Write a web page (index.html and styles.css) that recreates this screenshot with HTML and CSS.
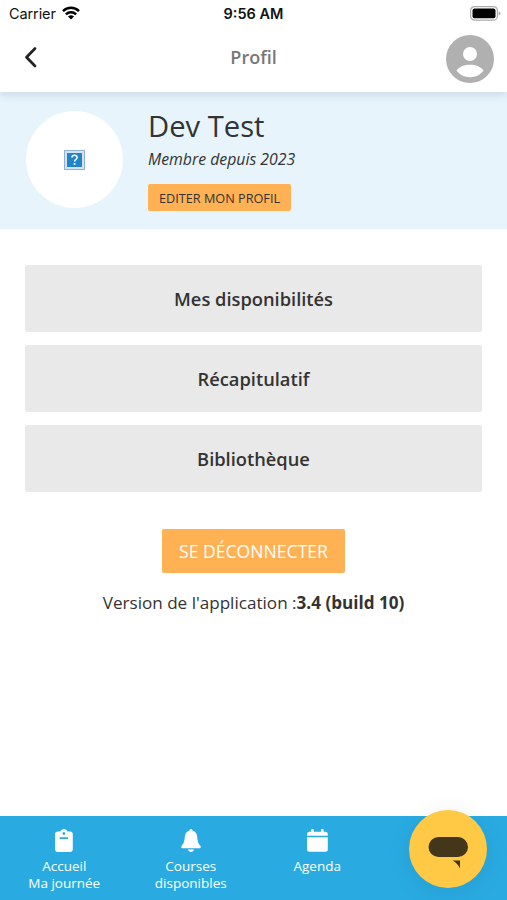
FILE: index.html
```
<!DOCTYPE html>
<html lang="fr">
<head>
    <meta charset="UTF-8">
    <meta name="viewport" content="width=device-width, initial-scale=1.0">
    <title>Profil</title>
    <link rel="stylesheet" href="styles.css">
</head>
<body>
    <div class="status-bar">
        <div class="carrier">
            <span>Carrier</span>
            <svg class="wifi" width="18" height="14" viewBox="0 0 18 14" fill="none" stroke="#000" stroke-width="2.5">
                <path d="M1 5.1a11.5 11.5 0 0 1 16 0"/>
                <path d="M3.9 8.3a7.3 7.3 0 0 1 10.2 0"/>
                <path d="M9 13.6L6 10.6a4.3 4.3 0 0 1 6 0z" fill="#000" stroke="none"/>
            </svg>
        </div>
        <div class="time">9:56 AM</div>
        <svg class="battery" width="31" height="15" viewBox="0 0 31 15">
            <rect x=".6" y=".6" width="26.8" height="13.6" rx="4" fill="#fff" stroke="#aaa" stroke-width="1.2"/>
            <rect x="2.5" y="2.5" width="23" height="9.8" rx="2" fill="#000"/>
            <path d="M28.7 5.2c2.3.8 2.3 3.6 0 4.4z" fill="#aaa"/>
        </svg>
    </div>
    <header class="header">
        <a href="#" class="back">
            <svg width="14" height="22" viewBox="0 0 14 22" fill="none" stroke="#222" stroke-width="2.7" stroke-linecap="round" stroke-linejoin="round">
                <path d="M11 2.5L2.5 11.2L11 20"/>
            </svg>
        </a>
        <h1 class="title">Profil</h1>
        <a href="#" class="account">
            <svg width="48" height="48" viewBox="0 0 48 48">
                <circle cx="24" cy="24" r="24" fill="#b0b0b0"/>
                <circle cx="24" cy="19" r="7" fill="#fff"/>
                <path d="M10.5 35.5C14 31.500 18 29.800 24 29.800S34 31.500 37.500 35.500C34.500 39.800 29.500 42.200 24 42.200S13.500 39.800 10.500 35.500z" fill="#fff"/>
            </svg>
        </a>
    </header>

    <section class="profile">
        <div class="avatar">
            <svg width="21" height="20" viewBox="0 0 21 20">
                <rect x=".5" y=".5" width="20" height="19" fill="#d3e3f3" stroke="#8fb2d6"/>
                <rect x="3" y="3" width="15" height="14" fill="#2285c7"/>
                <path d="M7.900 7.500c.1-3 5.200-3 5.200 0 0 1.900-2.500 1.900-2.500 4" fill="none" stroke="#fff" stroke-width="1.500"/>
                <rect x="9.700" y="13" width="1.700" height="1.800" fill="#fff"/>
            </svg>
        </div>
        <div class="infos">
            <h2 class="name">Dev Test</h2>
            <p class="since">Membre depuis 2023</p>
            <button class="edit">EDITER MON PROFIL</button>
        </div>
    </section>

    <main class="content">
        <div class="menu">
            <button class="menu-item">Mes disponibilités</button>
            <button class="menu-item">Récapitulatif</button>
            <button class="menu-item">Bibliothèque</button>
        </div>
        <button class="logout">SE DÉCONNECTER</button>
        <p class="version">Version de l'application :<b>3.4 (build 10)</b></p>
    </main>

    <nav class="tabs">
        <a href="#" class="tab">
            <svg width="18" height="23" viewBox="0 0 18 23">
                <path fill="#fff" fill-rule="evenodd" d="M3 2.500h2.300C6 .9 7.200 0 8.900 0s2.900.9 3.600 2.500H15a3 3 0 0 1 2.800 3V20a3 3 0 0 1-3 3H3a3 3 0 0 1-3-3V5.500a3 3 0 0 1 3-3zM8.900 3.100a1.400 1.400 0 1 0 .01 0zM4.700 8.300v1.700H13V8.300z"/>
            </svg>
            <span>Accueil<br>Ma journée</span>
        </a>
        <a href="#" class="tab">
            <svg width="20" height="23" viewBox="0 0 20 23" fill="#fff">
                <path d="M8.500 1.600a1.500 1.500 0 0 1 3 0c3.200.8 4.600 3.500 4.800 7 .2 3.800.9 5.800 3 8.200.9 1.200.3 2.400-1 2.400H1.700c-1.300 0-1.900-1.200-1-2.400 2.100-2.400 2.800-4.400 3-8.200.2-3.500 1.600-6.200 4.800-7z"/>
                <path d="M7 20.500h6c-.4 1.500-1.400 2.400-3 2.400s-2.600-.9-3-2.400z"/>
            </svg>
            <span>Courses<br>disponibles</span>
        </a>
        <a href="#" class="tab">
            <svg width="21" height="23" viewBox="0 0 21 23" fill="#fff">
                <path d="M0 6.700V5.200a2.500 2.500 0 0 1 2.500-2.500H4.200V1.200a1.300 1.300 0 0 1 2.600 0v1.500h7.200V1.200a1.300 1.300 0 0 1 2.600 0v1.500h1.700a2.500 2.500 0 0 1 2.500 2.500v1.500z"/>
                <path d="M0 8.200h20.800v12.100a2.500 2.500 0 0 1-2.500 2.500H2.500A2.500 2.500 0 0 1 0 20.300z"/>
            </svg>
            <span>Agenda</span>
        </a>
    </nav>
    <button class="chat">
        <svg width="40" height="32" viewBox="0 0 40 32" fill="#433619">
            <rect x=".5" y="0" width="39.500" height="20" rx="10"/>
            <path d="M24.500 23.500h7.500v8c-1.500-3.500-4-6-7.500-8z"/>
        </svg>
    </button>
</body>
</html>
```
FILE: styles.css
```
* {
    box-sizing: border-box;
}
body {
    font-family: 'Open Sans', sans-serif;
    margin: 0;
    height: 100vh;
    display: flex;
    flex-direction: column;
    background-color: #fff;
    color: #333;
    overflow: hidden;
}
h1, h2, p {
    margin: 0;
}
a {
    color: inherit;
    text-decoration: none;
}
button {
    font-family: inherit;
    color: inherit;
    border: none;
    border-radius: 2px;
    padding: 0;
    cursor: pointer;
}
svg {
    display: block;
}
.status-bar {
    display: grid;
    grid-template-columns: 1fr auto 1fr;
    align-items: center;
    height: 27px;
    padding: 0 6px 0 9px;
    font-family: Inter, sans-serif;
    font-size: 14.5px;
    color: #111;
    background-color: #fff;
    z-index: 2;
}
.carrier {
    display: flex;
    align-items: center;
    gap: 6px;
    letter-spacing: -0.1px;
}
.wifi {
    margin-bottom: 2px;
}
.time {
    font-weight: 600;
    margin-right: 3px;
}
.battery {
    justify-self: end;
}
.header {
    display: grid;
    grid-template-columns: 1fr auto 1fr;
    align-items: center;
    height: 65px;
    padding: 0 13px 0 24px;
    background-color: #fff;
    box-shadow: 0 2px 9px rgba(60, 90, 120, 0.2);
    clip-path: inset(0 0 -14px 0);
    z-index: 1;
}
.back {
    margin-bottom: 5px;
}
.title {
    font-size: 18px;
    font-weight: 600;
    color: #777;
    margin: 0 11px 6px 0;
}
.account {
    justify-self: end;
    margin-bottom: 1px;
}
.profile {
    display: flex;
    height: 137px;
    padding: 19px 26px;
    gap: 25px;
    background-color: #e7f4fc;
}
.avatar {
    display: flex;
    align-items: center;
    justify-content: center;
    width: 97px;
    height: 97px;
    border-radius: 50%;
    background-color: #fff;
}
.infos {
    display: flex;
    flex-direction: column;
    align-items: flex-start;
}
.name {
    font-size: 29.2px;
    font-weight: 400;
    line-height: 30px;
}
.since {
    font-size: 15.8px;
    font-style: italic;
    line-height: 22px;
    margin: 7px 0 14px;
}
.edit {
    flex-shrink: 0;
    width: 143px;
    height: 27px;
    font-size: 12.7px;
    background-color: #ffb153;
}
.content {
    display: flex;
    flex: 1;
    flex-direction: column;
    align-items: center;
    padding: 36px 25px 0;
}
.menu {
    display: grid;
    gap: 13px;
    width: 100%;
}
.menu-item {
    height: 67px;
    font-size: 18.3px;
    font-weight: 600;
    background-color: #e9e9e9;
}
.logout {
    width: 183px;
    height: 44px;
    margin-top: 37px;
    font-size: 17.6px;
    color: #fff;
    background-color: #ffb153;
}
.version {
    margin-top: 18px;
    font-size: 17.1px;
    line-height: 24px;
}
.tabs {
    display: grid;
    grid-template-columns: repeat(4, 1fr);
    height: 84px;
    padding: 13px 0 0 1px;
    background-color: #29abe2;
    color: #fff;
}
.tab {
    display: flex;
    flex-direction: column;
    align-items: center;
    gap: 6px;
    font-size: 13.5px;
    line-height: 17px;
    text-align: center;
}
.chat {
    position: absolute;
    right: 20px;
    bottom: 12px;
    display: flex;
    align-items: center;
    justify-content: center;
    width: 78px;
    height: 78px;
    padding-top: 8px;
    border-radius: 50%;
    background-color: #ffc845;
    box-shadow: 0 4px 24px rgba(0, 0, 0, 0.08);
}
```
